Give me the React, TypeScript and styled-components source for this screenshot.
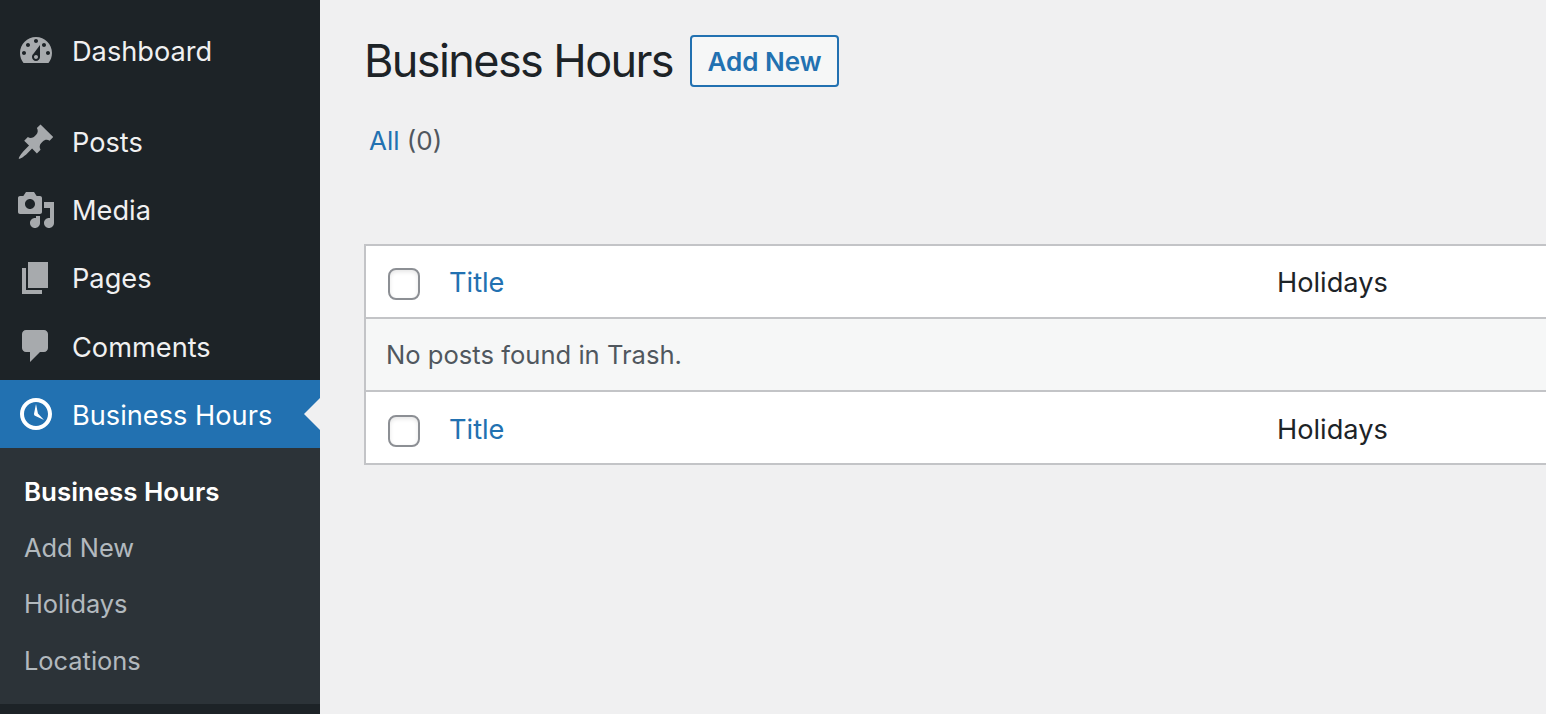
import styled, { createGlobalStyle } from 'styled-components';

const GlobalStyle = createGlobalStyle`
  html, body {
    margin: 0;
    height: 100%;
    overflow: hidden;
    background: #f0f0f1;
    font-family: Inter, "Noto Sans", sans-serif;
  }
`;

const icons: Record<string, string> = {
  dashboard:
    'M3.76 16h12.48c1.1-1.37 1.76-3.11 1.76-5 0-4.42-3.58-8-8-8s-8 3.58-8 8c0 1.89.66 3.63 1.76 5zM10 4c.55 0 1 .45 1 1s-.45 1-1 1-1-.45-1-1 .45-1 1-1zM6 6c.55 0 1 .45 1 1s-.45 1-1 1-1-.45-1-1 .45-1 1-1zm8 0c.55 0 1 .45 1 1s-.45 1-1 1-1-.45-1-1 .45-1 1-1zm-5.37 5.55L12 7v6c0 1.1-.9 2-2 2s-2-.9-2-2c0-.57.24-1.08.63-1.45zM4 10c.55 0 1 .45 1 1s-.45 1-1 1-1-.45-1-1 .45-1 1-1zm12 0c.55 0 1 .45 1 1s-.45 1-1 1-1-.45-1-1 .45-1 1-1zm-5 3c0-.55-.45-1-1-1s-1 .45-1 1 .45 1 1 1 1-.45 1-1z',
  posts:
    'M10.44 3.02l1.82-1.82 6.36 6.35-1.83 1.82c-1.05-.68-2.48-.57-3.41.36l-.75.75c-.92.93-1.04 2.35-.35 3.41l-1.83 1.82-2.41-2.41-2.8 2.79c-.42.42-3.38 2.71-3.8 2.29s1.86-3.39 2.28-3.81l2.79-2.79L4.1 9.36l1.83-1.82c1.05.69 2.48.57 3.4-.36l.75-.75c.93-.92 1.05-2.35.36-3.41z',
  media:
    'M13 11V4c0-.55-.45-1-1-1h-1.67L9 1H5L3.67 3H2c-.55 0-1 .45-1 1v7c0 .55.45 1 1 1h10c.55 0 1-.45 1-1zM7 4.5c1.38 0 2.5 1.12 2.5 2.5S8.38 9.5 7 9.5 4.5 8.38 4.5 7 5.62 4.5 7 4.5zM14 6h5v10.5c0 1.38-1.12 2.5-2.5 2.5S14 17.88 14 16.5s1.12-2.5 2.5-2.5c.17 0 .34.02.5.05V9h-3V6zm-4 8.05V13h2v3.5c0 1.38-1.12 2.5-2.5 2.5S7 17.88 7 16.5 8.12 14 9.5 14c.17 0 .34.02.5.05z',
  pages: 'M6 15V2h10v13H6zm-1 1h8v2H3V5h2v11z',
  comments:
    'M5 2h9c1.1 0 2 .9 2 2v7c0 1.1-.9 2-2 2h-2l-5 5v-5H5c-1.1 0-2-.9-2-2V4c0-1.1.9-2 2-2z',
  clock:
    'M10 2c4.42 0 8 3.58 8 8s-3.58 8-8 8-8-3.58-8-8 3.58-8 8-8zm0 14c3.31 0 6-2.69 6-6s-2.69-6-6-6-6 2.69-6 6 2.69 6 6 6zm-.71-5.29c.07.05.14.1.23.15l-.02.02L14 13l-3.03-3.19L10 5l-.97 4.81h.01c0 .02-.01.05-.02.09S9 9.97 9 10c0 .28.1.52.29.71z',
};

const MenuIcon = ({ name }: { name: string }) => (
  <IconBox viewBox="0 0 20 20" fill="currentColor">
    <path d={icons[name]} />
  </IconBox>
);

const App = () => (
  <Page>
    <GlobalStyle />
    <Sidebar>
      <Menu>
        <MenuItem>
          <MenuIcon name="dashboard" />
          <MenuLabel>Dashboard</MenuLabel>
        </MenuItem>
        <Separator />
        <MenuItem>
          <MenuIcon name="posts" />
          <MenuLabel>Posts</MenuLabel>
        </MenuItem>
        <MenuItem>
          <MenuIcon name="media" />
          <MenuLabel>Media</MenuLabel>
        </MenuItem>
        <MenuItem>
          <MenuIcon name="pages" />
          <MenuLabel>Pages</MenuLabel>
        </MenuItem>
        <MenuItem>
          <MenuIcon name="comments" />
          <MenuLabel $low>Comments</MenuLabel>
        </MenuItem>
        <MenuItem $current>
          <MenuIcon name="clock" />
          <MenuLabel $low>Business Hours</MenuLabel>
        </MenuItem>
      </Menu>
      <Submenu>
        <SubItem $current>Business Hours</SubItem>
        <SubItem>Add New</SubItem>
        <SubItem>Holidays</SubItem>
        <SubItem>Locations</SubItem>
      </Submenu>
    </Sidebar>
    <Main>
      <Heading>
        <Title>Business Hours</Title>
        <AddButton>Add New</AddButton>
      </Heading>
      <Filters>
        <TextLink>All</TextLink> (0)
      </Filters>
      <Table>
        <Row>
          <CheckCell>
            <Checkbox />
          </CheckCell>
          <TitleCell>
            <TextLink>Title</TextLink>
          </TitleCell>
          <HolidaysCell>Holidays</HolidaysCell>
        </Row>
        <EmptyRow>No posts found in Trash.</EmptyRow>
        <Row>
          <CheckCell>
            <Checkbox />
          </CheckCell>
          <TitleCell>
            <TextLink>Title</TextLink>
          </TitleCell>
          <HolidaysCell>Holidays</HolidaysCell>
        </Row>
      </Table>
    </Main>
  </Page>
);

const Page = styled.div`
  display: flex;
  height: 714px;
  overflow: hidden;
`;

const Sidebar = styled.nav`
  width: 320px;
  flex-shrink: 0;
  background: #1d2327;
  padding-top: 17px;
  box-sizing: border-box;
`;

const Menu = styled.div`
  display: flex;
  flex-direction: column;
`;

const Separator = styled.div`
  height: 23px;
`;

const MenuItem = styled.div<{ $current?: boolean }>`
  position: relative;
  height: 68px;
  display: flex;
  align-items: center;
  gap: 16px;
  padding-left: 16px;
  font-size: 27.2px;
  color: ${(p) => (p.$current ? '#fff' : '#f0f0f1')};
  background: ${(p) => (p.$current ? '#2271b1' : 'transparent')};

  svg {
    color: ${(p) => (p.$current ? '#fff' : '#a7aaad')};
  }

  ${(p) =>
    p.$current &&
    `
    &::after {
      content: '';
      position: absolute;
      right: 0;
      top: 50%;
      margin-top: -16px;
      border: 16px solid transparent;
      border-right-color: #f0f0f1;
    }
  `}
`;

const MenuLabel = styled.span<{ $low?: boolean }>`
  padding-top: ${(p) => (p.$low ? '2px' : '0')};
`;

const IconBox = styled.svg`
  width: 40px;
  height: 40px;
  flex-shrink: 0;
`;

const Submenu = styled.div`
  box-sizing: border-box;
  height: 256px;
  background: #2c3338;
  padding-top: 15px;
  display: flex;
  flex-direction: column;
`;

const SubItem = styled.div<{ $current?: boolean }>`
  height: 56.4px;
  flex-shrink: 0;
  display: flex;
  align-items: center;
  padding-left: 24px;
  font-size: ${(p) => (p.$current ? '25.9px' : '25.4px')};
  font-weight: ${(p) => (p.$current ? 600 : 400)};
  color: ${(p) => (p.$current ? '#fff' : 'rgba(240, 246, 252, 0.7)')};
`;

const Main = styled.main`
  flex: 1;
  min-width: 0;
  overflow: hidden;
  padding: 35px 0 0 44px;
  color: #1d2327;
`;

const Heading = styled.div`
  display: flex;
  align-items: center;
  gap: 17px;
`;

const Title = styled.h1`
  margin: 0;
  font-size: 45px;
  font-weight: 400;
  line-height: 52px;
  letter-spacing: -1.6px;
`;

const AddButton = styled.div`
  box-sizing: border-box;
  width: 149px;
  height: 52px;
  display: flex;
  align-items: center;
  justify-content: center;
  border: 2px solid #2271b1;
  border-radius: 4px;
  background: #f6f7f7;
  color: #2271b1;
  font-size: 26px;
  font-weight: 600;
`;

const Filters = styled.div`
  margin: 37px 0 0 5px;
  height: 34px;
  line-height: 34px;
  font-size: 26px;
  color: #50575e;
`;

const TextLink = styled.span`
  color: #2271b1;
`;

const Table = styled.div`
  margin: 86px -8px 0 0;
  border: 2px solid #c3c4c7;
  background: #fff;
  font-size: 27.2px;
`;

const Row = styled.div`
  box-sizing: border-box;
  height: 71px;
  padding-top: 3px;
  display: flex;
  align-items: center;
  color: #1d2327;

  &:first-child {
    padding-top: 1px;
  }
`;

const CheckCell = styled.div`
  width: 83px;
  padding: 3px 0 0 22px;
  box-sizing: border-box;
  flex-shrink: 0;
`;

const Checkbox = styled.div`
  box-sizing: border-box;
  width: 32px;
  height: 32px;
  border: 2px solid #8c8f94;
  border-radius: 8px;
  background: #fff;
  box-shadow: inset 0 2px 4px rgba(0, 0, 0, 0.1);
`;

const TitleCell = styled.div`
  width: 828px;
  flex-shrink: 0;
`;

const HolidaysCell = styled.div`
  flex: 1;
`;

const EmptyRow = styled.div`
  height: 71px;
  box-sizing: content-box;
  display: flex;
  align-items: center;
  padding-left: 20px;
  background: #f6f7f7;
  border-top: 2px solid #c3c4c7;
  border-bottom: 2px solid #c3c4c7;
  color: #50575e;
  font-size: 25.6px;
  line-height: 33px;
  padding-top: 0;
`;

export default App;
